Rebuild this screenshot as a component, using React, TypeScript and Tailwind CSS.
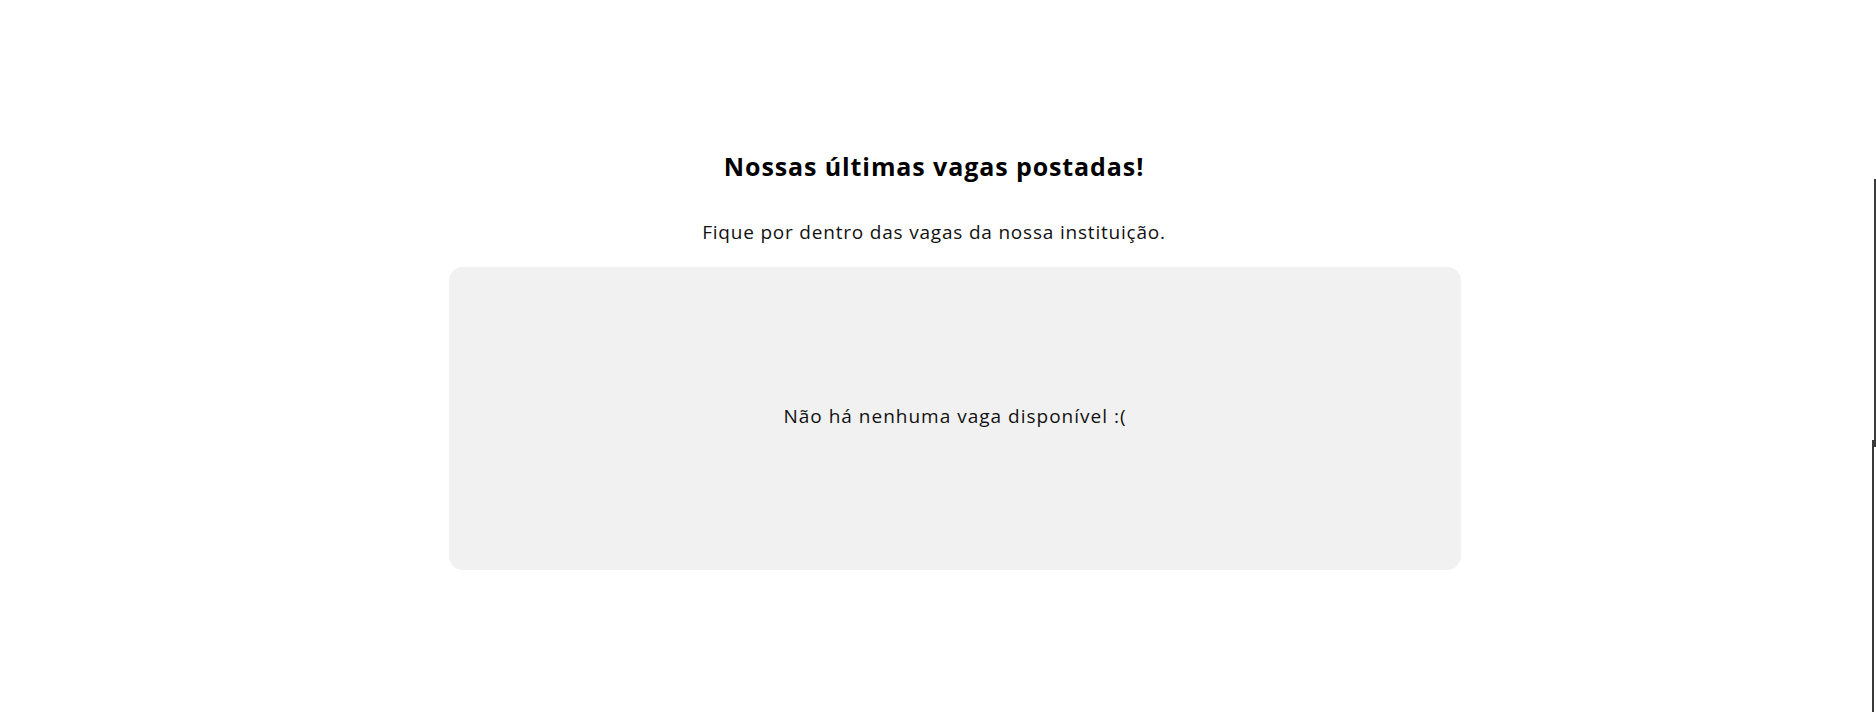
import React from "react";

export default function App() {
  return (
    <div className="relative w-[1876px] h-[712px] bg-white overflow-hidden" style={{ fontFamily: "'Open Sans', sans-serif" }}>
      <div className="w-[1868px] flex flex-col items-center pt-[148px]">
        <h1 className="text-[25px] leading-[37px] font-bold tracking-[0.9px] text-black">Nossas últimas vagas postadas!</h1>
        <p className="mt-[33px] text-[19px] leading-[28px] tracking-[0.8px] text-[#111]">Fique por dentro das vagas da nossa instituição.</p>
        <div className="mt-[21px] ml-[42px] w-[1012px] h-[303px] pb-[5px] rounded-[14px] bg-[#f1f1f1] flex items-center justify-center">
          <span className="text-[19px] leading-[28px] tracking-[1px] text-[#111]">Não há nenhuma vaga disponível :(</span>
        </div>
      </div>
      <div className="absolute left-[1874px] top-[179px] w-[2px] h-[268px] bg-[#3a3a3a]" />
      <div className="absolute left-[1872px] top-[440px] w-[2px] h-[272px] bg-[#3a3a3a]" />
    </div>
  );
}
